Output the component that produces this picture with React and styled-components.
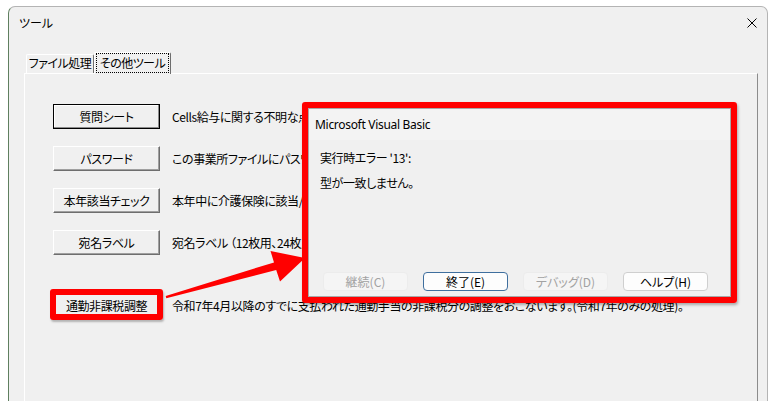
import React from 'react';
import styled, { createGlobalStyle } from 'styled-components';

const GlobalStyle = createGlobalStyle`
  html, body {
    margin: 0;
    padding: 0;
    background: #fff;
  }
  body {
    font-family: "Noto Sans CJK JP", "Noto Sans", sans-serif;
    font-size: 12px;
    color: #000;
  }
`;

const Screen = styled.div`
  position: relative;
  width: 777px;
  height: 401px;
  overflow: hidden;
  padding: 6px 9px 0 8px;
  box-sizing: border-box;
  background: #fff;
`;

const Window = styled.div`
  height: 420px;
  background: #f0f0f0;
  border: 1px solid #b4b4b4;
  border-left-color: #5f7f5f;
  border-radius: 7px 7px 0 0;
  box-sizing: border-box;
  display: flex;
  flex-direction: column;
`;

const TitleBar = styled.div`
  height: 31px;
  display: flex;
  align-items: center;
  justify-content: space-between;
  padding: 0 10px;
  font-size: 12px;
  font-feature-settings: "palt";
`;

const Body = styled.div`
  flex: 1;
  display: flex;
  flex-direction: column;
  padding: 13px 9px 0 15px;
`;

const TabRow = styled.div`
  display: flex;
  align-items: flex-end;
  height: 22px;
  padding-left: 2px;
`;

const Tab = styled.div`
  position: relative;
  z-index: ${(p) => (p.$active ? 1 : 0)};
  box-sizing: border-box;
  width: ${(p) => p.$width}px;
  height: ${(p) => (p.$active ? 22 : 19)}px;
  margin-bottom: ${(p) => (p.$active ? -1 : 0)}px;
  padding-bottom: ${(p) => (p.$active ? 1 : 2)}px;
  display: flex;
  align-items: center;
  justify-content: center;
  background: #f0f0f0;
  border: 1px solid;
  border-bottom: none;
  border-color: #fff #6e6e6e #fff #fff;
  border-radius: 2px 2px 0 0;
  font-size: 12px;
  font-feature-settings: "palt";
  letter-spacing: -0.5px;
  line-height: 16px;
`;

const FocusLabel = styled.span`
  outline: 1px dotted #000;
  outline-offset: 0;
  padding: 1px 3px;
  line-height: 16px;
`;

const Panel = styled.div`
  flex: 1;
  border-top: 1px solid #fff;
  border-left: 1px solid #fff;
  border-right: 1px solid #8c8c8c;
  padding: 30px 0 0 28px;
`;

const ToolList = styled.div`
  display: flex;
  flex-direction: column;
  gap: 17px;
`;

const ToolRow = styled.div`
  display: flex;
  align-items: center;
  gap: 12px;
  margin-top: ${(p) => (p.$spaced ? 21 : 0)}px;
`;

const ButtonWrap = styled.div`
  position: relative;
  flex: none;
`;

const ToolButton = styled.button`
  box-sizing: border-box;
  width: 107px;
  height: 25px;
  padding: 0;
  background: #f0f0f0;
  border: 1px solid;
  border-color: ${(p) => (p.$default ? '#000' : '#fff #6e6e6e #6e6e6e #fff')};
  box-shadow: ${(p) =>
    p.$default ? 'inset -1px -1px #8c8c8c, inset 1px 1px #fff' : 'inset -1px -1px #a0a0a0'};
  font-family: "Noto Sans CJK JP", sans-serif;
  font-size: 12px;
  font-feature-settings: "palt";
  letter-spacing: -0.4px;
  color: #000;
`;

const RedMark = styled.div`
  position: absolute;
  top: -4px;
  left: -3px;
  right: -3px;
  bottom: -2px;
  border: 6px solid #ff0000;
  border-radius: 3px;
  box-shadow: 1px 2px 2px rgba(0, 0, 0, 0.25);
`;

const Description = styled.span`
  white-space: nowrap;
  font-size: 12px;
  font-feature-settings: "palt";
  letter-spacing: -0.4px;
`;

const ArrowLayer = styled.svg`
  position: absolute;
  left: 0;
  top: 0;
  pointer-events: none;
`;

const DialogFrame = styled.div`
  position: absolute;
  left: 302px;
  top: 102px;
  width: 435px;
  height: 201px;
  box-sizing: border-box;
  border: 6px solid #ff0000;
  border-radius: 3px;
  box-shadow: 1px 2px 3px rgba(0, 0, 0, 0.3);
`;

const Dialog = styled.div`
  height: 100%;
  box-sizing: border-box;
  display: flex;
  flex-direction: column;
  background: #f0f0f0;
  border: 1px solid #a8a8a8;
`;

const DialogTitle = styled.div`
  height: 31px;
  display: flex;
  align-items: center;
  padding-left: 6px;
  background: #f3f3f3;
  font-family: "Noto Sans", "Open Sans", sans-serif;
  font-size: 12px;
  letter-spacing: -0.3px;
`;

const DialogBody = styled.div`
  padding: 5px 0 0 11px;
  font-feature-settings: "palt";
  letter-spacing: -0.4px;
`;

const MessageLine = styled.div`
  height: 25px;
  line-height: 25px;
  font-size: 12px;
`;

const DialogButtons = styled.div`
  margin-top: auto;
  display: flex;
  gap: 15px;
  padding: 0 0 5px 14px;
`;

const DialogButton = styled.button`
  box-sizing: border-box;
  width: 85px;
  height: 19px;
  padding: 0;
  border-radius: 4px;
  border: 1px solid
    ${(p) => (p.$focused ? '#3f6f9e' : p.disabled ? '#ececec' : '#cfcfcf')};
  background: ${(p) => (p.disabled ? '#f5f5f5' : '#fdfdfd')};
  color: ${(p) => (p.disabled ? '#a2a2a2' : '#000')};
  font-family: "Noto Sans CJK JP", sans-serif;
  font-size: 12px;
  font-feature-settings: "palt";
  line-height: 16px;
`;

const CloseIcon = () => (
  <svg width="10" height="10" viewBox="0 0 10 10">
    <path d="M0.5 0.5 L9.5 9.5 M9.5 0.5 L0.5 9.5" stroke="#000" strokeWidth="1" />
  </svg>
);

const tools = [
  { label: '質問シート', text: 'Cells給与に関する不明な点', def: true },
  { label: 'パスワード', text: 'この事業所ファイルにパスワード' },
  { label: '本年該当チェック', text: '本年中に介護保険に該当/' },
  { label: '宛名ラベル', text: '宛名ラベル （12枚用、24枚用' },
  {
    label: '通勤非課税調整',
    text: '令和7年4月以降のすでに支払われた通勤手当の非課税分の調整をおこないます。(令和7年のみの処理)。',
    marked: true,
  },
];

const dialogButtons = [
  { label: '継続(C)', disabled: true },
  { label: '終了(E)', focused: true },
  { label: 'デバッグ(D)', disabled: true },
  { label: 'ヘルプ(H)' },
];

export default function App() {
  return (
    <Screen>
      <GlobalStyle />
      <Window>
        <TitleBar>
          <span>ツール</span>
          <CloseIcon />
        </TitleBar>
        <Body>
          <TabRow>
            <Tab $width={68}>ファイル処理</Tab>
            <Tab $width={77} $active>
              <FocusLabel>その他ツール</FocusLabel>
            </Tab>
          </TabRow>
          <Panel>
            <ToolList>
              {tools.map((t) => (
                <ToolRow key={t.label} $spaced={t.marked}>
                  <ButtonWrap>
                    <ToolButton $default={t.def}>{t.label}</ToolButton>
                    {t.marked && <RedMark />}
                  </ButtonWrap>
                  <Description>{t.text}</Description>
                </ToolRow>
              ))}
            </ToolList>
          </Panel>
        </Body>
      </Window>

      <ArrowLayer width="777" height="401" viewBox="0 0 777 401">
        <polygon
          points="166.3,298.2 276.2,270 280,281.5 305,258 270.5,251 274,262.4 165.7,296"
          fill="#ff0000"
        />
      </ArrowLayer>

      <DialogFrame>
        <Dialog>
          <DialogTitle>Microsoft Visual Basic</DialogTitle>
          <DialogBody>
            <MessageLine>実行時エラー '13':</MessageLine>
            <MessageLine>型が一致しません。</MessageLine>
          </DialogBody>
          <DialogButtons>
            {dialogButtons.map((b) => (
              <DialogButton key={b.label} disabled={b.disabled} $focused={b.focused}>
                {b.label}
              </DialogButton>
            ))}
          </DialogButtons>
        </Dialog>
      </DialogFrame>
    </Screen>
  );
}
